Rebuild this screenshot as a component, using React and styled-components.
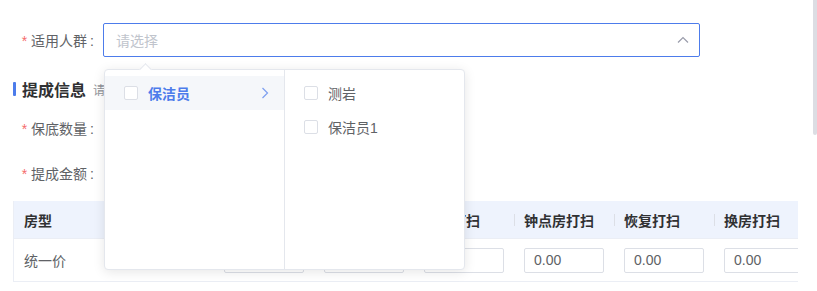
import styled, { createGlobalStyle } from 'styled-components'

const GlobalStyle = createGlobalStyle`
  html, body {
    margin: 0;
    padding: 0;
    background: #fff;
  }
  body {
    font-family: "Liberation Sans", "Noto Sans CJK SC", sans-serif;
    font-size: 14px;
    color: #606266;
    overflow: hidden;
  }
`

const blue = '#4d7ceb'

const Page = styled.div`
  position: relative;
  width: 817px;
  height: 291px;
  padding: 23px 20px 0 13px;
  box-sizing: border-box;
  display: flex;
  flex-direction: column;
`
const ScrollThumb = styled.div`
  position: absolute;
  right: 0;
  top: 0;
  width: 4px;
  height: 135px;
  background: #dcdde3;
  border-radius: 0 0 2px 2px;
`
const FormItem = styled.div`
  display: flex;
  align-items: center;
  height: 34px;
  margin-top: ${({ $top }) => $top || 0}px;
`
const Label = styled.label`
  width: 90px;
  box-sizing: border-box;
  padding-right: 9px;
  flex: none;
  text-align: right;
  color: #606266;
  font-size: 14px;
  white-space: nowrap;
  &::before {
    content: '*';
    color: #f56c6c;
    margin-right: 4px;
  }
  &::after {
    content: ':';
    margin-left: 3px;
  }
`
const SelectWrap = styled.div`
  position: relative;
  flex: none;
  width: 597px;
`
const SelectBox = styled.div`
  height: 34px;
  box-sizing: border-box;
  border: 1px solid ${blue};
  border-radius: 2px;
  display: flex;
  align-items: center;
  justify-content: space-between;
  padding: 0 10px 0 12px;
  color: #c0c4cc;
`
const Popover = styled.div`
  position: absolute;
  top: 46px;
  left: 1px;
  display: flex;
  background: #fff;
  border: 1px solid #e4e7ed;
  border-radius: 4px;
  box-shadow: 0 2px 12px rgba(0, 0, 0, 0.1);
  z-index: 10;
  &::before {
    content: '';
    position: absolute;
    top: -5px;
    left: 36px;
    width: 8px;
    height: 8px;
    background: #fff;
    border-top: 1px solid #e4e7ed;
    border-left: 1px solid #e4e7ed;
    transform: rotate(45deg);
  }
`
const Menu = styled.ul`
  list-style: none;
  margin: 0;
  padding: 6px 0;
  width: 179px;
  height: 187px;
  & + & {
    border-left: 1px solid #e4e7ed;
  }
`
const MenuItem = styled.li`
  display: flex;
  align-items: center;
  height: 34px;
  padding: 0 15px 0 19px;
  background: ${({ $active }) => ($active ? '#f5f7fa' : 'transparent')};
  color: ${({ $active }) => ($active ? blue : '#606266')};
  font-weight: ${({ $active }) => ($active ? 700 : 400)};
`
const Check = styled.span`
  width: 14px;
  height: 14px;
  box-sizing: border-box;
  border: 1px solid #dcdfe6;
  border-radius: 2px;
  background: #fff;
  margin-right: 10px;
  flex: none;
`
const ItemText = styled.span`
  flex: 1;
`
const SectionTitle = styled.div`
  display: flex;
  align-items: center;
  height: 20px;
  margin-top: 22px;
  &::before {
    content: '';
    width: 3px;
    height: 14px;
    background: ${blue};
    border-radius: 1px;
    margin-right: 6px;
  }
`
const TitleText = styled.span`
  font-size: 16px;
  font-weight: 700;
  color: #303133;
`
const TitleHint = styled.span`
  font-size: 12px;
  color: #909399;
  margin-left: 7px;
`
const TableWrap = styled.div`
  margin-top: 11px;
  width: 784px;
  overflow: hidden;
  border-left: 1px solid #ebeef5;
`
const Table = styled.div`
  display: grid;
  grid-template-columns: 200px repeat(6, 100px);
  width: 800px;
`
const HeadCell = styled.div`
  position: relative;
  height: 38px;
  box-sizing: border-box;
  display: flex;
  align-items: center;
  padding: 0 10px;
  background: #eef3fd;
  border-bottom: 1px solid #ebeef5;
  color: #303133;
  font-weight: 700;
  white-space: nowrap;
  ${({ $sep }) =>
    $sep &&
    `&::before {
      content: '';
      position: absolute;
      left: 0;
      top: 13px;
      width: 1px;
      height: 12px;
      background: #dcdfe6;
    }`}
`
const BodyCell = styled.div`
  height: 43px;
  box-sizing: border-box;
  display: flex;
  align-items: center;
  padding: 0 10px;
  border-bottom: 1px solid #ebeef5;
  color: #606266;
`
const NumInput = styled.div`
  width: 80px;
  height: 25px;
  box-sizing: border-box;
  border: 1px solid #dcdfe6;
  border-radius: 2px;
  padding: 0 9px;
  display: flex;
  align-items: center;
  color: #606266;
  flex: none;
`

const columns = ['入住打扫', '脏房打扫', '退房打扫', '钟点房打扫', '恢复打扫', '换房打扫']

function App() {
  return (
    <>
      <GlobalStyle />
      <Page>
        <ScrollThumb />
        <FormItem>
          <Label>适用人群</Label>
          <SelectWrap>
            <SelectBox>
              <span>请选择</span>
              <svg width="12" height="8" viewBox="0 0 12 8">
                <polyline points="1,6.5 6,1.5 11,6.5" fill="none" stroke="#9a9cab" strokeWidth="1.2" />
              </svg>
            </SelectBox>
            <Popover>
              <Menu>
                <MenuItem $active>
                  <Check />
                  <ItemText>保洁员</ItemText>
                  <svg width="8" height="12" viewBox="0 0 8 12">
                    <polyline points="1.5,1 6.5,6 1.5,11" fill="none" stroke="#7d9ff0" strokeWidth="1.2" />
                  </svg>
                </MenuItem>
              </Menu>
              <Menu>
                <MenuItem>
                  <Check />
                  <ItemText>测岩</ItemText>
                </MenuItem>
                <MenuItem>
                  <Check />
                  <ItemText>保洁员1</ItemText>
                </MenuItem>
              </Menu>
            </Popover>
          </SelectWrap>
        </FormItem>
        <SectionTitle>
          <TitleText>提成信息</TitleText>
          <TitleHint>请设置各房型提成金额</TitleHint>
        </SectionTitle>
        <FormItem $top={12}>
          <Label>保底数量</Label>
        </FormItem>
        <FormItem $top={11}>
          <Label>提成金额</Label>
        </FormItem>
        <TableWrap>
          <Table>
            <HeadCell>房型</HeadCell>
            {columns.map((c) => (
              <HeadCell key={c} $sep>
                {c}
              </HeadCell>
            ))}
            <BodyCell>统一价</BodyCell>
            {columns.map((c) => (
              <BodyCell key={c}>
                <NumInput>0.00</NumInput>
              </BodyCell>
            ))}
          </Table>
        </TableWrap>
      </Page>
    </>
  )
}

export default App
